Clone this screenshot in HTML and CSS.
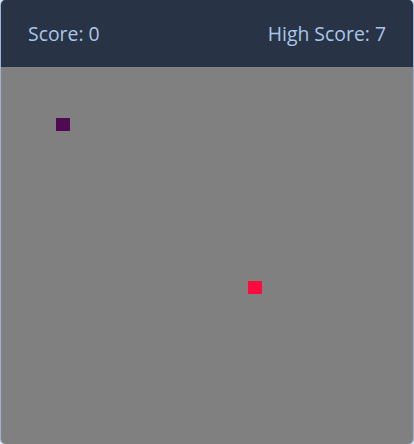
FILE: index.html
```html
<!DOCTYPE html>
<html>
<head>
<meta charset="utf-8">
<link rel="stylesheet" href="styles.css">
</head>
<body>
<div class="game">
  <div class="bar">
    <span class="score">Score: 0</span>
    <span class="score">High Score: 7</span>
  </div>
  <div class="board">
    <div class="cell snake" style="left:55px;top:51px"></div>
    <div class="cell food" style="left:247px;top:214px"></div>
  </div>
</div>
</body>
</html>
```
FILE: styles.css
```css
html, body {
  margin: 0;
  padding: 0;
  background: #dbe6f4;
}
.game {
  width: 414px;
  height: 444px;
  display: flex;
  flex-direction: column;
  border-radius: 5px;
  overflow: hidden;
  box-sizing: border-box;
  border-left: 1px solid #9fb3d6;
  border-right: 1px solid #9fb3d6;
}
.bar {
  height: 67px;
  flex: none;
  background: #283345;
  display: flex;
  align-items: center;
  justify-content: space-between;
  padding: 0 27px 0 27px;
  box-sizing: border-box;
}
.score {
  font-family: "Open Sans", sans-serif;
  font-size: 19.4px;
  color: #a9c6ea;
  line-height: 1;
}
.board {
  flex: 1;
  background: #808080;
  position: relative;
}
.cell {
  position: absolute;
  width: 14px;
  height: 13px;
}
.snake { background: #4f0b52; }
.food { background: #ff0a3c; }
```
